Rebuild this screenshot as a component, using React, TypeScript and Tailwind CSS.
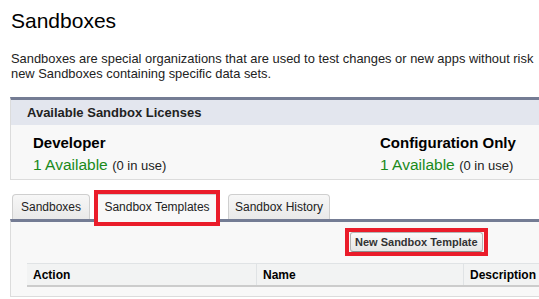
const font = { fontFamily: '"Liberation Sans", Arial, sans-serif' };

const licenses = [
  { name: "Developer", available: 1, inUse: 0 },
  { name: "Configuration Only", available: 1, inUse: 0 },
];

const columns = [
  { label: "Action", w: "w-[229px]" },
  { label: "Name", w: "w-[207px]" },
  { label: "Description", w: "w-[260px]" },
];

const App = () => {
  return (
    <div className="w-[539px] h-[299px] overflow-hidden bg-white" style={font}>
      <div className="w-[760px] pl-[10px]">
        <h1 className="pt-[9px] pl-[1px] text-[21px] leading-[24px] text-black">Sandboxes</h1>

        <div className="mt-[18px] pl-[1px] text-[12.9px] leading-[15px] text-[#222] whitespace-nowrap">
          <div>Sandboxes are special organizations that are used to test changes or new apps without risk</div>
          <div>new Sandboxes containing specific data sets.</div>
        </div>

        {/* Licenses box */}
        <div className="mt-[16px] border-t-[3px] border-[#747c94] border-l border-b border-l-[#dcdcdc] border-b-[#dcdcdc] bg-[#f8f8f8]">
          <div className="h-[25px] bg-[#e3e6ee] pl-[16px] flex items-center text-[13px] font-bold text-[#222]">
            Available Sandbox Licenses
          </div>
          <div className="flex pl-[22px] pt-[9px] pb-[3px]">
            {licenses.map((l, i) => (
              <div key={l.name} className={i === 0 ? "w-[347px]" : ""}>
                <div className="text-[15px] leading-[18px] font-bold text-black">{l.name}</div>
                <div className="mt-[3px] leading-[20px] whitespace-nowrap">
                  <span className="text-[15.5px] text-[#1a8a1a]">{l.available} Available</span>{" "}
                  <span className="text-[13px] text-[#222]">({l.inUse} in use)</span>
                </div>
              </div>
            ))}
          </div>
        </div>

        {/* Tabs */}
        <div className="mt-[14px] flex items-end h-[25px] text-[12px] text-[#222]">
          <div className="ml-[2px] w-[78px] h-[25px] flex items-center justify-center rounded-t-[4px] border border-b-0 border-[#cfcfcf] bg-gradient-to-b from-[#f7f7f7] to-[#e9e9e9]">
            Sandboxes
          </div>
          <div className="relative z-10 ml-[5px] w-[124px] h-[28px] -mb-[3px] flex items-center justify-center pb-[3px] rounded-t-[4px] border border-b-0 border-[#cfcfcf] bg-[#f8f8f8]">
            Sandbox Templates
            <div className="absolute -left-[2px] -right-[2px] -top-[5px] -bottom-[4px] border-4 border-[#ea1c2a]" />
          </div>
          <div className="ml-[9px] w-[102px] h-[25px] flex items-center justify-center rounded-t-[4px] border border-b-0 border-[#cfcfcf] bg-gradient-to-b from-[#f7f7f7] to-[#e9e9e9]">
            Sandbox History
          </div>
        </div>

        {/* Tab panel */}
        <div className="border-t-[3px] border-t-[#747c94] border-l border-b border-l-[#dcdcdc] border-b-[#dcdcdc] bg-[#f8f8f8] pl-[16px] pb-[9px]">
          <div className="flex pt-[10px] pl-[323px]">
            <button className="relative h-[20px] px-[4px] rounded-[3px] border border-[#b5b5b5] border-b-[#8f8f8f] bg-gradient-to-b from-[#fafafa] to-[#e6e6e6] text-[11px] leading-[18px] font-bold text-[#333]">
              New Sandbox Template
              <span className="absolute -left-[6px] -right-[6px] -top-[5px] -bottom-[5px] border-4 border-[#ea1c2a]" />
            </button>
          </div>
          <div className="mt-[11px] flex h-[24px] bg-[#f2f3f3] border-t border-[#e0e3e5] border-b-2 border-b-[#cccccc]">
            {columns.map((c, i) => (
              <div
                key={c.label}
                className={`${c.w} flex items-center pl-[6px] text-[12px] font-bold text-black ${i > 0 ? "border-l border-[#e0e3e5]" : ""}`}
              >
                {c.label}
              </div>
            ))}
          </div>
        </div>
      </div>
    </div>
  );
};

export default App;
